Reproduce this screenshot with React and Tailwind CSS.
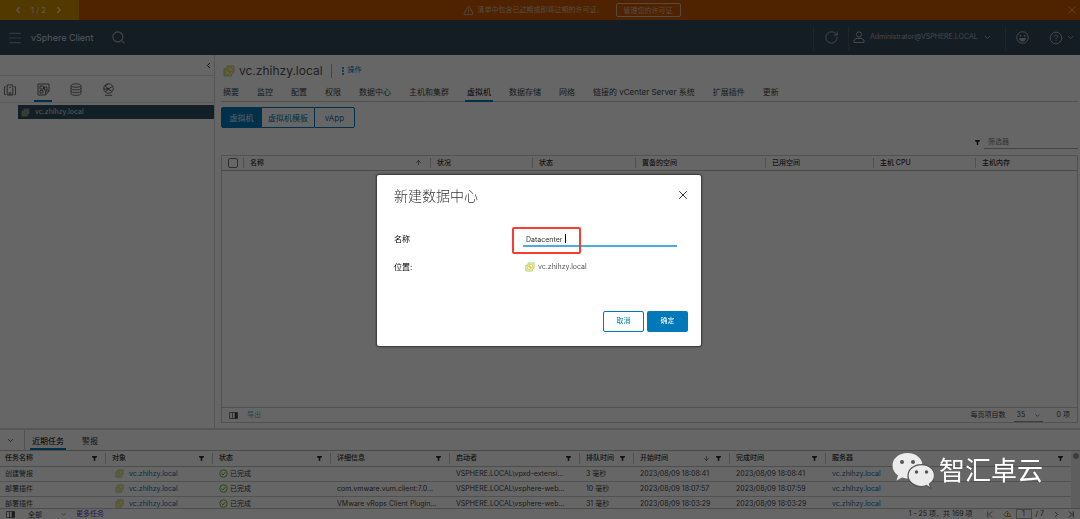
import React, { useState } from "react";
import {
  ChevronLeft,
  ChevronRight,
  ChevronDown,
  Menu,
  Search,
  RotateCw,
  X,
  ArrowUp,
  ArrowDown,
  EllipsisVertical,
  TriangleAlert,
  CircleHelp,
} from "lucide-react";

const tabs = ["摘要", "监控", "配置", "权限", "数据中心", "主机和集群", "虚拟机", "数据存储", "网络", "链接的 vCenter Server 系统", "扩展插件", "更新"];
const vmColumns = [
  { name: "名称", sorted: true },
  { name: "状况" },
  { name: "状态" },
  { name: "置备的空间" },
  { name: "已用空间" },
  { name: "主机 CPU" },
  { name: "主机内存" },
];
const taskColumns = ["任务名称", "对象", "状态", "详细信息", "启动者", "排队时间", "开始时间", "完成时间", "服务器"];
const tasks = [
  { name: "创建警报", detail: "", by: "VSPHERE.LOCAL\\vpxd-extensi...", wait: "3 毫秒", start: "2023/08/09 18:08:41", end: "2023/08/09 18:08:41" },
  { name: "部署插件", detail: "com.vmware.vum.client:7.0...", by: "VSPHERE.LOCAL\\vsphere-web...", wait: "10 毫秒", start: "2023/08/09 18:07:57", end: "2023/08/09 18:07:59" },
  { name: "部署插件", detail: "VMware vRops Client Plugin...", by: "VSPHERE.LOCAL\\vsphere-web...", wait: "31 毫秒", start: "2023/08/09 18:03:29", end: "2023/08/09 18:03:29" },
];
const host = "vc.zhihzy.local";

function VCenterIcon({ className }) {
  return (
    <svg viewBox="0 0 22 22" className={className} fill="none" aria-hidden="true">
      <path d="M7 2h13v12l-4 2v4H2V7h5z" fill="#f3f8d0" stroke="#a3cf6b" strokeWidth="1.800" strokeLinejoin="round" />
      <rect x="9.500" y="5" width="7.500" height="7.500" rx="1" stroke="#f0c03c" strokeWidth="1.700" />
      <rect x="5" y="9.500" width="7.500" height="7.500" rx="1" stroke="#f0c03c" strokeWidth="1.700" />
    </svg>
  );
}

function FilterIcon({ className = "" }) {
  return (
    <svg viewBox="0 0 10 10" className={`size-[5px] shrink-0 ${className}`} fill="currentColor" aria-hidden="true">
      <path d="M0 0h10v2L6.500 5v5h-3V5L0 2z" />
    </svg>
  );
}

function ColumnsIcon() {
  return (
    <svg viewBox="0 0 18 14" className="h-[7px] w-[9px]" fill="none" aria-hidden="true">
      <path d="M1 1h16v12H1zM7 1v12M12 1v12" stroke="#555" strokeWidth="1.500" />
      <path d="M12 1h5v12h-5z" fill="#444" />
    </svg>
  );
}

function DoneIcon() {
  return (
    <svg viewBox="0 0 18 18" className="size-[9px] shrink-0" fill="none" stroke="#5aa220" strokeWidth="1.700" aria-hidden="true">
      <circle cx="9" cy="9" r="7.500" />
      <path d="M5 9l3 3 5-6" />
    </svg>
  );
}

function EdgeIcon({ flip }) {
  return (
    <svg viewBox="0 0 12 14" className={flip ? "h-[7px] w-[6px] rotate-180" : "h-[7px] w-[6px]"} fill="none" stroke="currentColor" strokeWidth="1.800" aria-hidden="true">
      <path d="M1.500 1v12M10 1L4 7l6 6" />
    </svg>
  );
}

function Banner() {
  return (
    <div className="flex h-5 shrink-0 bg-[#c65600] text-[7px] text-[#d8b9a0]">
      <div className="flex w-[79px] items-center justify-center gap-2 bg-[#cc8f00] pr-[2px] text-[#e6dccb]">
        <button aria-label="上一条"><ChevronLeft className="size-[10px]" strokeWidth={3} /></button>
        <span className="text-[8px]">1 / 2</span>
        <button aria-label="下一条"><ChevronRight className="size-[10px]" strokeWidth={3} /></button>
      </div>
      <div className="flex flex-1 items-center justify-center">
        <TriangleAlert className="size-[11px]" />
        <span className="mr-[12px] ml-[4px]">清单中包含已过期或即将过期的许可证。</span>
        <button className="h-[14px] rounded-xs border border-[#d8b9a0] px-[7px] leading-none">管理您的许可证</button>
      </div>
      <button aria-label="关闭" className="px-[2px]"><X className="size-3" strokeWidth={1.500} /></button>
    </div>
  );
}

function Header() {
  return (
    <header className="flex h-[35px] shrink-0 items-center bg-[#35495a] text-[#abb3ba]">
      <button aria-label="菜单" className="ml-[7px] text-[#7f8b94]"><Menu className="size-4" strokeWidth={1.700} /></button>
      <span className="ml-2 text-[9px] text-[#d3d8dc]">vSphere Client</span>
      <button aria-label="搜索" className="ml-[18px]"><Search className="size-[15px]" strokeWidth={1.700} /></button>
      <div className="ml-auto flex items-center">
        <button aria-label="刷新" className="flex h-6 w-[35px] items-center justify-center border-l border-[#4b5c6a]"><RotateCw className="size-[15px]" strokeWidth={1.500} /></button>
        <button className="flex h-6 w-[157px] items-center border-l border-[#4b5c6a] px-[4px] text-[7px]">
          <svg viewBox="0 0 24 26" className="mr-[5px] h-[13px] w-3" fill="none" stroke="currentColor" strokeWidth="2" aria-hidden="true">
            <circle cx="12" cy="7" r="5.200" />
            <path d="M2 23v-3c0-3 3-5 6-5h8c3 0 6 2 6 5v3z" strokeLinejoin="round" />
          </svg>
          Administrator@VSPHERE.LOCAL
          <ChevronDown className="ml-[5px] size-[9px]" strokeWidth={2.500} />
        </button>
        <button aria-label="反馈" className="flex h-6 items-center border-l border-[#4b5c6a] px-[10px]">
          <svg viewBox="0 0 26 26" className="size-[13px]" fill="none" stroke="currentColor" strokeWidth="2" aria-hidden="true">
            <circle cx="13" cy="13" r="11.500" />
            <circle cx="8.500" cy="9.500" r="1" fill="currentColor" />
            <circle cx="17.500" cy="9.500" r="1" fill="currentColor" />
            <path d="M7 15h12c0 7-12 7-12 0z" fill="currentColor" />
          </svg>
        </button>
        <button aria-label="帮助" className="flex items-center gap-[3px] pr-[5px] pl-[10px]">
          <CircleHelp className="size-[14px]" strokeWidth={1.600} />
          <ChevronDown className="size-[9px]" strokeWidth={2.500} />
        </button>
      </div>
    </header>
  );
}

function Sidebar() {
  return (
    <aside className="flex w-[215px] shrink-0 flex-col border-r border-[#d6d6d6]">
      <div className="flex h-[21px] items-center justify-end border-b border-[#dedede] pr-[1px]">
        <button aria-label="折叠"><ChevronLeft className="size-[9px]" strokeWidth={2.200} /></button>
      </div>
      <nav className="flex h-[27px] items-end border-b border-[#e0e0e0] text-[#606060]">
        <button aria-label="主机" className="flex h-[22px] w-[20px] justify-start pl-[3px] pt-[4px]">
          <svg viewBox="0 0 28 26" className="h-3 w-[14px]" fill="none" stroke="currentColor" strokeWidth="2" aria-hidden="true">
            <path d="M8 24V2h12v22zM5 6H2v17h3M23 6h3v17h-3M12 24v-5h4v5M12 7h4" />
          </svg>
        </button>
        <button aria-label="虚拟机" className="ml-[14px] flex h-[22px] w-[18px] justify-center border-b-2 border-[#0079b8] pt-[3px]">
          <svg viewBox="0 0 26 26" className="size-[13px]" fill="none" stroke="currentColor" strokeWidth="2" aria-hidden="true">
            <path d="M2 2h22v14l-7 8H2zM24 16h-7v8M6 6h7v6H6zM6 15h6v5H6zM15 8h5v6h-5z" />
          </svg>
        </button>
        <button aria-label="存储" className="ml-[16px] flex h-[22px] w-[16px] justify-center pt-[3px]">
          <svg viewBox="0 0 24 26" className="h-[13px] w-3" fill="none" stroke="currentColor" strokeWidth="1.800" aria-hidden="true">
            <ellipse cx="12" cy="5" rx="10" ry="3.500" />
            <path d="M2 5v16c0 5 20 5 20 0V5M2 10.500c0 4.500 20 4.500 20 0M2 16c0 4.500 20 4.500 20 0" />
          </svg>
        </button>
        <button aria-label="网络" className="ml-[15px] flex h-[22px] w-[18px] justify-center pt-[3px]">
          <svg viewBox="0 0 26 26" className="size-[13px]" fill="none" stroke="currentColor" strokeWidth="1.900" aria-hidden="true">
            <circle cx="13" cy="11" r="9.500" />
            <path d="M6 5l6 7 9-5M12 12l-5 6M12 12l8 5M13 2l-7 4M3 12l9 0M6 24.500h14" />
            <circle cx="12" cy="12" r="2" fill="currentColor" />
          </svg>
        </button>
      </nav>
      <a href="#vc" className="mt-[2px] ml-[18px] flex h-[14px] items-center bg-[#304f62] pl-[3px] text-[7px] text-[#d5dade]">
        <VCenterIcon className="mr-[5px] size-[9px] opacity-50" />
        {host}
      </a>
    </aside>
  );
}

function Main() {
  return (
    <main className="mr-[2px] mb-[5px] ml-[6px] flex min-w-0 flex-1 flex-col">
      <div className="flex h-[31px] items-center">
        <VCenterIcon className="ml-[2px] size-[12px]" />
        <h1 className="ml-[4px] text-[12px] text-[#555]">{host}</h1>
        <button className="ml-[8px] flex h-[14px] items-center border-l border-[#aaa] pl-[6px] text-[7px] text-[#0079b8]">
          <EllipsisVertical className="size-[10px]" strokeWidth={3} />操作
        </button>
      </div>
      <nav className="flex h-[16px] shrink-0 gap-[18px] border-b border-[#cacaca] pl-[2px] text-[8px] whitespace-nowrap text-[#444]">
        {tabs.map((t) => (
          <a key={t} href="#tab" className={t === "虚拟机" ? "relative text-black" : "relative"}>
            {t}
            {t === "虚拟机" && <span className="absolute inset-x-[-2px] bottom-[-1px] h-[2px] bg-[#0079b8]" />}
          </a>
        ))}
      </nav>
      <div className="mt-[5px] flex h-[21px] shrink-0 text-[8px] text-[#0079b8]">
        <button className="w-[41px] rounded-l-xs border border-[#0079b8] bg-[#0079b8] text-[#e4eef5]">虚拟机</button>
        <button className="w-[52px] border-y border-[#0079b8]">虚拟机模板</button>
        <button className="w-[41px] rounded-r-xs border border-[#0079b8]">vApp</button>
      </div>
      <div className="mt-[7px] mb-[6px] flex shrink-0 items-center justify-end">
        <FilterIcon className="mr-[4px] text-[#333]" />
        <input aria-label="筛选器" placeholder="筛选器" className="h-[14px] w-[94px] border-b border-[#aaa] px-[4px] text-[7px] placeholder:text-[#858585]" />
      </div>
      <div className="flex flex-1 flex-col border border-[#cecece]">
        <table className="w-full table-fixed border-b border-[#b8b8b8] text-[7px] text-[#333]">
          <colgroup>
            <col className="w-[21px]" />
            <col className="w-[187px]" />
            <col className="w-[102px]" />
            <col className="w-[103px]" />
            <col className="w-[130px]" />
            <col className="w-[108px]" />
            <col className="w-[102px]" />
            <col />
          </colgroup>
          <thead>
            <tr className="h-[14px]">
              <th className="p-0"><input type="checkbox" aria-label="全选" className="mx-auto block size-[10px] appearance-none rounded-xs border border-[#777]" /></th>
              {vmColumns.map((c) => (
                <th key={c.name} className="p-0 text-left font-medium">
                  <span className="flex h-[10px] items-center justify-between border-l border-[#c8c8c8] pr-[8px] pl-[6px]">
                    {c.name}
                    {c.sorted && <ArrowUp className="size-[7px]" />}
                  </span>
                </th>
              ))}
            </tr>
          </thead>
        </table>
        <div className="mt-auto flex h-[15px] items-center border-t border-[#cecece] px-[7px] text-[7px] text-[#444]">
          <button aria-label="列"><ColumnsIcon /></button>
          <button className="ml-[9px] text-[#74a9c7]">导出</button>
          <label htmlFor="size" className="ml-auto">每页项目数</label>
          <span className="relative ml-[8px] flex items-center">
            <select id="size" className="h-[14px] w-[29px] appearance-none border-b border-[#999] pt-[2px] pl-[3px] text-[7px]"><option>35</option></select>
            <ChevronDown className="pointer-events-none absolute right-[2px] size-[7px]" />
          </span>
          <span className="ml-[14px]">0 项</span>
        </div>
      </div>
    </main>
  );
}

function HostLink() {
  return <a href="#vc" className="text-[#1873a3]">{host}</a>;
}

function Tasks() {
  return (
    <section className="flex h-[91px] shrink-0 flex-col border-t-2 border-[#dadada]">
      <div className="flex h-[21px] shrink-0 border-b border-[#b8b8b8] text-[8px] text-[#333]">
        <button aria-label="收起" className="flex w-[25px] items-center justify-center border-r border-[#cecece] pr-[3px]"><ChevronDown className="size-[9px]" /></button>
        <button className="ml-[5px] border-b-2 border-[#0079b8] px-[2px] pt-[3px] text-black">近期任务</button>
        <button className="ml-[16px] pt-[2px]">警报</button>
      </div>
      <div className="flex min-h-0 flex-1 overflow-hidden">
        <table className="w-full table-fixed text-[7px] leading-[10px] whitespace-nowrap text-[#444]">
          <colgroup>
            <col className="w-[105px]" />
            <col className="w-[107px]" />
            <col className="w-[118px]" />
            <col className="w-[119px]" />
            <col className="w-[130px]" />
            <col className="w-[54px]" />
            <col className="w-[96px]" />
            <col className="w-[96px]" />
            <col />
          </colgroup>
          <thead>
            <tr className="h-[15px] border-b border-[#c0c0c0] text-[#333]">
              {taskColumns.map((c, i) => (
                <th key={c} className="p-0 text-left font-medium">
                  <span className={i ? "flex h-[11px] items-center border-l border-[#c8c8c8] pr-[8px] pl-[6px]" : "flex h-[11px] items-center pr-[8px] pl-[5px]"}>
                    {c}
                    {c === "开始时间" && <ArrowDown className="ml-auto size-[7px]" />}
                    <FilterIcon className={c === "开始时间" ? "ml-[6px]" : "ml-auto"} />
                  </span>
                </th>
              ))}
            </tr>
          </thead>
          <tbody>
            {tasks.map((t, i) => (
              <tr key={i} className="h-[15px] border-b border-[#cacaca] last:border-b-0">
                <td className="p-0 pl-[5px]">{t.name}</td>
                <td className="p-0 pl-[10px]"><span className="flex items-center gap-[5px]"><VCenterIcon className="size-[9px]" /><HostLink /></span></td>
                <td className="p-0 pl-[7px]"><span className="flex items-center gap-[2px]"><DoneIcon />已完成</span></td>
                <td className="p-0 pl-[7px]">{t.detail}</td>
                <td className="p-0 pl-[7px]">{t.by}</td>
                <td className="p-0 pl-[7px]">{t.wait}</td>
                <td className="p-0 pl-[7px]">{t.start}</td>
                <td className="p-0 pl-[7px]">{t.end}</td>
                <td className="p-0 pl-[7px]"><HostLink /></td>
              </tr>
            ))}
          </tbody>
        </table>
        <div className="w-[9px] shrink-0 bg-[#ececec] pt-[2px] pl-[2px]"><div className="size-[6px] rounded-full bg-[#9a9a9a]" /></div>
      </div>
      <div className="flex h-[11px] shrink-0 items-center border-t border-[#c0c0c0] px-[6px] text-[7px] leading-[10px] text-[#444]">
        <button aria-label="列"><ColumnsIcon /></button>
        <span className="relative ml-[13px] flex items-center">
          <select aria-label="任务范围" className="h-[11px] w-[39px] appearance-none text-[7px] leading-[11px]"><option>全部</option></select>
          <ChevronDown className="pointer-events-none absolute right-0 size-[7px]" />
        </span>
        <a href="#more" className="ml-[9px] text-[#5046c8]">更多任务</a>
        <span className="ml-auto">1 - 25 项，共 169 项</span>
        <button aria-label="第一页" className="ml-[14px] text-[#777]"><EdgeIcon /></button>
        <button aria-label="上一页" className="ml-[10px]">
          <svg viewBox="0 0 18 16" className="h-[8px] w-[9px]" fill="none" stroke="#c99a10" strokeWidth="2" aria-hidden="true"><path d="M2 9l6-7 8 11H5zM9 6v6" /></svg>
        </button>
        <input aria-label="页码" defaultValue="1" className="ml-[4px] h-[10px] w-[16px] border border-[#b0b0b0] text-center text-[7px]" />
        <span className="ml-[4px]">/ 7</span>
        <button aria-label="下一页" className="ml-[8px]"><ChevronRight className="size-[9px]" /></button>
        <button aria-label="最后一页" className="ml-[7px]"><EdgeIcon flip /></button>
      </div>
    </section>
  );
}

function NewDatacenterDialog() {
  const [name, setName] = useState("Datacenter");
  return (
    <div className="fixed inset-0 flex items-center justify-center bg-black/60 pt-[2px] pr-[2px]">
      <form role="dialog" aria-labelledby="dialog-title" onSubmit={(e) => e.preventDefault()} className="w-[324px] rounded-xs bg-white px-[17px] pt-[10px] pb-[14px] text-[7px] text-[#333] shadow-[0_0_2px_1px_rgba(0,0,0,0.5)]">
        <div className="flex h-5 items-center justify-between">
          <h2 id="dialog-title" className="text-[14px] font-light">新建数据中心</h2>
          <button type="button" aria-label="关闭" className="-mr-[6px]"><X className="size-[14px]" strokeWidth={1.700} /></button>
        </div>
        <div className="mt-[25px] grid grid-cols-[129px_154px] items-center">
          <label htmlFor="dc-name" className="text-[8px] text-black">名称</label>
          <span className="relative flex h-[17px] items-center">
            <input id="dc-name" value={name} onChange={(e) => setName(e.target.value)} className="h-full w-full border-b-2 border-[#49afd9] px-[3px] pt-[3px] text-[7px] outline-none" />
            <span className="absolute top-[4px] left-[42px] h-[9px] w-px bg-black" />
            <span className="pointer-events-none absolute -top-[3px] -left-[11px] h-[27px] w-[69px] rounded-xs border-2 border-[#fb3a30]" />
          </span>
          <span className="mt-3 text-[8px] text-black">位置:</span>
          <span className="mt-3 flex h-4 items-center gap-[3px] pl-[2px] text-[#555]"><VCenterIcon className="size-[10px]" />{host}</span>
        </div>
        <div className="-mr-1 mt-9 flex justify-end gap-[3px]">
          <button type="button" className="h-[21px] w-[41px] rounded-xs border border-[#0079b8] text-[#0079b8]">取消</button>
          <button type="submit" className="h-[21px] w-[41px] rounded-xs bg-[#0079b8] text-white">确定</button>
        </div>
      </form>
    </div>
  );
}

function Watermark() {
  return (
    <div className="pointer-events-none fixed right-[37px] bottom-[30px] flex items-center gap-[5px] text-[26px] leading-9 text-white">
      <svg viewBox="0 0 84 74" className="h-[37px] w-[42px]" aria-hidden="true">
        <path d="M31 2C14 2 1 13 1 27c0 8 4 15 11 20l-3 10 11-6c4 1 7 2 11 2 17 0 30-12 30-26S48 2 31 2z" fill="#ececec" />
        <circle cx="20" cy="20" r="4" fill="#555" />
        <circle cx="42" cy="20" r="4" fill="#555" />
        <path d="M59 25c-15 0-27 10-27 22s12 22 27 22c4 0 7-1 10-2l9 6-3-9c6-4 10-10 10-17 0-12-11-22-26-22z" fill="#ececec" stroke="#555" strokeWidth="2.500" />
        <circle cx="49" cy="40" r="3.500" fill="#555" />
        <circle cx="69" cy="40" r="3.500" fill="#555" />
      </svg>
      <span>智汇卓云</span>
    </div>
  );
}

export default function App() {
  return (
    <div className="flex h-screen flex-col overflow-hidden bg-white font-['Inter','Noto_Sans_CJK_SC',sans-serif]">
      <Banner />
      <Header />
      <div className="flex min-h-0 flex-1">
        <Sidebar />
        <Main />
      </div>
      <Tasks />
      <NewDatacenterDialog />
      <Watermark />
    </div>
  );
}
